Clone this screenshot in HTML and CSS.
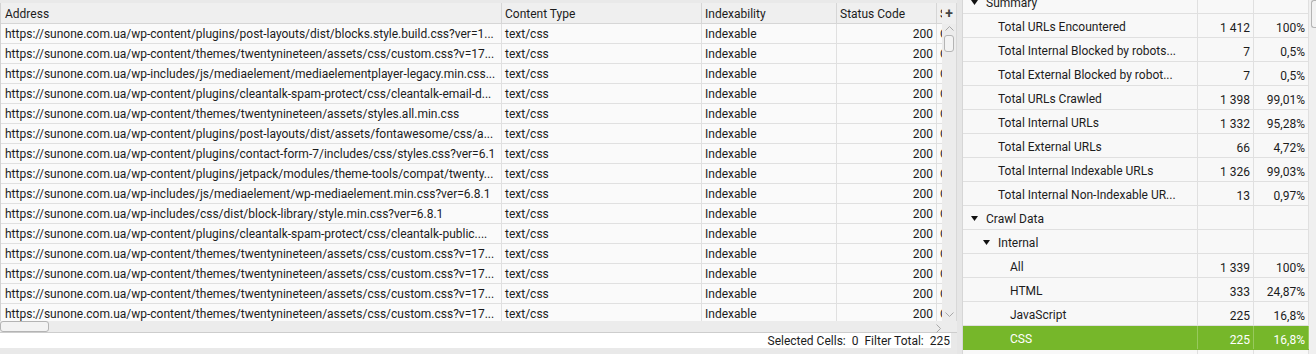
FILE: index.html
```html
<!DOCTYPE html>
<html lang="en">
<head>
  <meta charset="UTF-8">
  <meta name="viewport" content="width=device-width, initial-scale=1.0">
  <title>Crawl Overview</title>
  <link rel="stylesheet" href="styles.css">
</head>
<body>
  <!-- Left: URL table -->
  <div class="left">
    <div class="grid">
      <div class="table">
        <div class="row head">
          <div class="cell c-addr">Address</div>
          <div class="cell c-type">Content Type</div>
          <div class="cell c-index">Indexability</div>
          <div class="cell c-code">Status Code</div>
          <div class="cell c-status">Status</div>
        </div>
        <div class="row">
          <div class="cell c-addr">https://sunone.com.ua/wp-content/plugins/post-layouts/dist/blocks.style.build.css?ver=1...</div>
          <div class="cell c-type">text/css</div><div class="cell c-index">Indexable</div><div class="cell c-code">200</div><div class="cell c-status">OK</div>
        </div>
        <div class="row">
          <div class="cell c-addr">https://sunone.com.ua/wp-content/themes/twentynineteen/assets/css/custom.css?v=17...</div>
          <div class="cell c-type">text/css</div><div class="cell c-index">Indexable</div><div class="cell c-code">200</div><div class="cell c-status">OK</div>
        </div>
        <div class="row">
          <div class="cell c-addr">https://sunone.com.ua/wp-includes/js/mediaelement/mediaelementplayer-legacy.min.css...</div>
          <div class="cell c-type">text/css</div><div class="cell c-index">Indexable</div><div class="cell c-code">200</div><div class="cell c-status">OK</div>
        </div>
        <div class="row">
          <div class="cell c-addr">https://sunone.com.ua/wp-content/plugins/cleantalk-spam-protect/css/cleantalk-email-d...</div>
          <div class="cell c-type">text/css</div><div class="cell c-index">Indexable</div><div class="cell c-code">200</div><div class="cell c-status">OK</div>
        </div>
        <div class="row">
          <div class="cell c-addr">https://sunone.com.ua/wp-content/themes/twentynineteen/assets/styles.all.min.css</div>
          <div class="cell c-type">text/css</div><div class="cell c-index">Indexable</div><div class="cell c-code">200</div><div class="cell c-status">OK</div>
        </div>
        <div class="row">
          <div class="cell c-addr">https://sunone.com.ua/wp-content/plugins/post-layouts/dist/assets/fontawesome/css/a...</div>
          <div class="cell c-type">text/css</div><div class="cell c-index">Indexable</div><div class="cell c-code">200</div><div class="cell c-status">OK</div>
        </div>
        <div class="row">
          <div class="cell c-addr">https://sunone.com.ua/wp-content/plugins/contact-form-7/includes/css/styles.css?ver=6.1</div>
          <div class="cell c-type">text/css</div><div class="cell c-index">Indexable</div><div class="cell c-code">200</div><div class="cell c-status">OK</div>
        </div>
        <div class="row">
          <div class="cell c-addr">https://sunone.com.ua/wp-content/plugins/jetpack/modules/theme-tools/compat/twenty...</div>
          <div class="cell c-type">text/css</div><div class="cell c-index">Indexable</div><div class="cell c-code">200</div><div class="cell c-status">OK</div>
        </div>
        <div class="row">
          <div class="cell c-addr">https://sunone.com.ua/wp-includes/js/mediaelement/wp-mediaelement.min.css?ver=6.8.1</div>
          <div class="cell c-type">text/css</div><div class="cell c-index">Indexable</div><div class="cell c-code">200</div><div class="cell c-status">OK</div>
        </div>
        <div class="row">
          <div class="cell c-addr">https://sunone.com.ua/wp-includes/css/dist/block-library/style.min.css?ver=6.8.1</div>
          <div class="cell c-type">text/css</div><div class="cell c-index">Indexable</div><div class="cell c-code">200</div><div class="cell c-status">OK</div>
        </div>
        <div class="row">
          <div class="cell c-addr">https://sunone.com.ua/wp-content/plugins/cleantalk-spam-protect/css/cleantalk-public....</div>
          <div class="cell c-type">text/css</div><div class="cell c-index">Indexable</div><div class="cell c-code">200</div><div class="cell c-status">OK</div>
        </div>
        <div class="row">
          <div class="cell c-addr">https://sunone.com.ua/wp-content/themes/twentynineteen/assets/css/custom.css?v=17...</div>
          <div class="cell c-type">text/css</div><div class="cell c-index">Indexable</div><div class="cell c-code">200</div><div class="cell c-status">OK</div>
        </div>
        <div class="row">
          <div class="cell c-addr">https://sunone.com.ua/wp-content/themes/twentynineteen/assets/css/custom.css?v=17...</div>
          <div class="cell c-type">text/css</div><div class="cell c-index">Indexable</div><div class="cell c-code">200</div><div class="cell c-status">OK</div>
        </div>
        <div class="row">
          <div class="cell c-addr">https://sunone.com.ua/wp-content/themes/twentynineteen/assets/css/custom.css?v=17...</div>
          <div class="cell c-type">text/css</div><div class="cell c-index">Indexable</div><div class="cell c-code">200</div><div class="cell c-status">OK</div>
        </div>
        <div class="row">
          <div class="cell c-addr">https://sunone.com.ua/wp-content/themes/twentynineteen/assets/css/custom.css?v=17...</div>
          <div class="cell c-type">text/css</div><div class="cell c-index">Indexable</div><div class="cell c-code">200</div><div class="cell c-status">OK</div>
        </div>
      </div>

      <!-- Vertical scrollbar with column chooser -->
      <div class="vscroll">
        <div class="col-add">+</div>
        <div class="track">
          <svg class="chev" width="9" height="5" viewBox="0 0 9 5"><polyline points="0.5,4.5 4.5,0.5 8.5,4.5" fill="none" stroke="#a8a8a8"/></svg>
          <div class="thumb"></div>
          <svg class="chev down" width="9" height="5" viewBox="0 0 9 5"><polyline points="0.5,0.5 4.5,4.5 8.5,0.5" fill="none" stroke="#a8a8a8"/></svg>
        </div>
      </div>
    </div>

    <div class="hscroll">
      <div class="hthumb"></div>
      <svg class="hchev" width="5" height="9" viewBox="0 0 5 9"><polyline points="0.5,0.5 4.5,4.5 0.5,8.5" fill="none" stroke="#a8a8a8"/></svg>
    </div>

    <div class="status"><span>Selected Cells:</span><span class="val">0</span><span class="val">Filter Total:</span><span class="val">225</span></div>
  </div>

  <div class="splitter"></div>

  <!-- Right: overview tree -->
  <div class="right">
    <div class="tree">
      <div class="trow">
        <div class="tcell label lv0"><svg class="tri" width="7" height="5" viewBox="0 0 7 5"><polygon points="0,0 7,0 3.5,5" fill="#111"/></svg>Summary</div>
        <div class="tcell num"></div><div class="tcell pct"></div>
      </div>
      <div class="trow">
        <div class="tcell label lv1">Total URLs Encountered</div>
        <div class="tcell num">1 412</div><div class="tcell pct">100%</div>
      </div>
      <div class="trow">
        <div class="tcell label lv1">Total Internal Blocked by robots...</div>
        <div class="tcell num">7</div><div class="tcell pct">0,5%</div>
      </div>
      <div class="trow">
        <div class="tcell label lv1">Total External Blocked by robot...</div>
        <div class="tcell num">7</div><div class="tcell pct">0,5%</div>
      </div>
      <div class="trow">
        <div class="tcell label lv1">Total URLs Crawled</div>
        <div class="tcell num">1 398</div><div class="tcell pct">99,01%</div>
      </div>
      <div class="trow">
        <div class="tcell label lv1">Total Internal URLs</div>
        <div class="tcell num">1 332</div><div class="tcell pct">95,28%</div>
      </div>
      <div class="trow">
        <div class="tcell label lv1">Total External URLs</div>
        <div class="tcell num">66</div><div class="tcell pct">4,72%</div>
      </div>
      <div class="trow">
        <div class="tcell label lv1">Total Internal Indexable URLs</div>
        <div class="tcell num">1 326</div><div class="tcell pct">99,03%</div>
      </div>
      <div class="trow">
        <div class="tcell label lv1">Total Internal Non-Indexable UR...</div>
        <div class="tcell num">13</div><div class="tcell pct">0,97%</div>
      </div>
      <div class="trow">
        <div class="tcell label lv0"><svg class="tri" width="7" height="5" viewBox="0 0 7 5"><polygon points="0,0 7,0 3.5,5" fill="#111"/></svg>Crawl Data</div>
        <div class="tcell num"></div><div class="tcell pct"></div>
      </div>
      <div class="trow">
        <div class="tcell label lv1t"><svg class="tri" width="7" height="5" viewBox="0 0 7 5"><polygon points="0,0 7,0 3.5,5" fill="#111"/></svg>Internal</div>
        <div class="tcell num"></div><div class="tcell pct"></div>
      </div>
      <div class="trow">
        <div class="tcell label lv2">All</div>
        <div class="tcell num">1 339</div><div class="tcell pct">100%</div>
      </div>
      <div class="trow">
        <div class="tcell label lv2">HTML</div>
        <div class="tcell num">333</div><div class="tcell pct">24,87%</div>
      </div>
      <div class="trow">
        <div class="tcell label lv2">JavaScript</div>
        <div class="tcell num">225</div><div class="tcell pct">16,8%</div>
      </div>
      <div class="trow selected">
        <div class="tcell label lv2">CSS</div>
        <div class="tcell num">225</div><div class="tcell pct">16,8%</div>
      </div>
      <div class="trow">
        <div class="tcell label lv2"></div>
        <div class="tcell num"></div><div class="tcell pct"></div>
      </div>
    </div>
    <div class="rscroll">
      <div class="rthumb"></div>
    </div>
  </div>
</body>
</html>
```

FILE: styles.css
```css
body {
  margin: 0;
  width: 1316px;
  height: 354px;
  overflow: hidden;
  display: flex;
  font-family: Roboto, "Liberation Sans", sans-serif;
  font-size: 12px;
  color: #1c1c1c;
  background-color: #ececec;
}

/* left pane */
.left {
  width: 957px;
  flex-shrink: 0;
  display: flex;
  flex-direction: column;
  padding-top: 3px;
  background-color: #e9e9e9;
}
.grid {
  display: flex;
  height: 318px;
}
.table {
  width: 942px;
  overflow: hidden;
  border-left: 1px solid #d2d2d2;
  background-color: #fafafa;
}
.row {
  display: flex;
  height: 19px;
  line-height: 20px;
  border-bottom: 1px solid #e0e0e0;
}
.row.head {
  height: 20px;
  line-height: 23px;
  background-color: #efefef;
  border-bottom-color: #d6d6d6;
}
.cell {
  flex-shrink: 0;
  box-sizing: border-box;
  padding: 0 3px;
  white-space: nowrap;
  overflow: hidden;
  border-right: 1px solid #e0e0e0;
}
.head .cell {
  border-right-color: #d6d6d6;
}
.c-addr {
  width: 501px;
  padding-left: 4px;
}
.c-type {
  width: 200px;
}
.c-index {
  width: 135px;
}
.c-code {
  width: 100px;
  text-align: right;
}
.head .c-code {
  text-align: left;
}
.c-status {
  width: 100px;
}

.vscroll {
  width: 14px;
  display: flex;
  flex-direction: column;
  background-color: #ececec;
  border-right: 1px solid #d8d8d8;
}
.col-add {
  height: 21px;
  line-height: 20px;
  text-align: center;
  font-size: 14px;
  font-weight: bold;
  color: #444;
  background-color: #efefef;
}
.track {
  flex: 1;
  display: flex;
  flex-direction: column;
  align-items: center;
}
.chev {
  margin-top: 2px;
}
.chev.down {
  margin-top: auto;
  margin-bottom: 4px;
}
.thumb {
  width: 8px;
  height: 15px;
  margin-top: 4px;
  border: 1px solid #b4b4b4;
  border-radius: 3px;
  background-color: #f3f3f3;
}

.hscroll {
  height: 11px;
  display: flex;
  align-items: center;
  background-color: #ececec;
  border-bottom: 1px solid #cdcdcd;
}
.hthumb {
  width: 47px;
  height: 9px;
  border: 1px solid #b4b4b4;
  border-radius: 3px;
  background-color: #f3f3f3;
}
.hchev {
  margin-left: auto;
  margin-right: 16px;
  margin-top: 3px;
}

.status {
  height: 15px;
  line-height: 16px;
  margin-right: 6px;
  padding-right: 1px;
  text-align: right;
  white-space: nowrap;
  background-color: #fff;
}
.status .val {
  margin-left: 6px;
}

.splitter {
  width: 5px;
  flex-shrink: 0;
  background-color: #e6e6e6;
}

/* right pane */
.right {
  flex: 1;
  display: flex;
  overflow: hidden;
  border-left: 1px solid #d6d6d6;
  background-color: #f8f8f8;
}
.tree {
  width: 346px;
  margin-top: -10px;
}
.trow {
  display: flex;
  height: 23px;
  line-height: 24px;
  border-bottom: 1px solid #e0e0e0;
}
.tcell {
  flex-shrink: 0;
  box-sizing: border-box;
  padding-top: 2px;
  white-space: nowrap;
  overflow: hidden;
  border-right: 1px solid #e0e0e0;
}
.label {
  width: 235px;
  display: flex;
  align-items: center;
}
.num {
  width: 56px;
  padding-right: 3px;
  text-align: right;
}
.pct {
  width: 55px;
  padding-right: 3px;
  text-align: right;
}
.tri {
  flex-shrink: 0;
  margin-right: 8px;
}
.lv0 {
  padding-left: 8px;
}
.lv1 {
  padding-left: 35px;
}
.lv1t {
  padding-left: 20px;
}
.lv2 {
  padding-left: 47px;
}
.trow.selected {
  color: #fff;
  background-color: #76b72a;
  border-bottom-color: #76b72a;
}
.trow.selected .tcell {
  border-right-color: #98c95e;
}

.rscroll {
  flex: 1;
  display: flex;
  justify-content: flex-end;
  background-color: #f0f0f0;
}
.rthumb {
  width: 4px;
  height: 26px;
  border: 1px solid #b4b4b4;
  border-right: none;
  border-radius: 3px 0 0 3px;
  background-color: #f3f3f3;
}
```
